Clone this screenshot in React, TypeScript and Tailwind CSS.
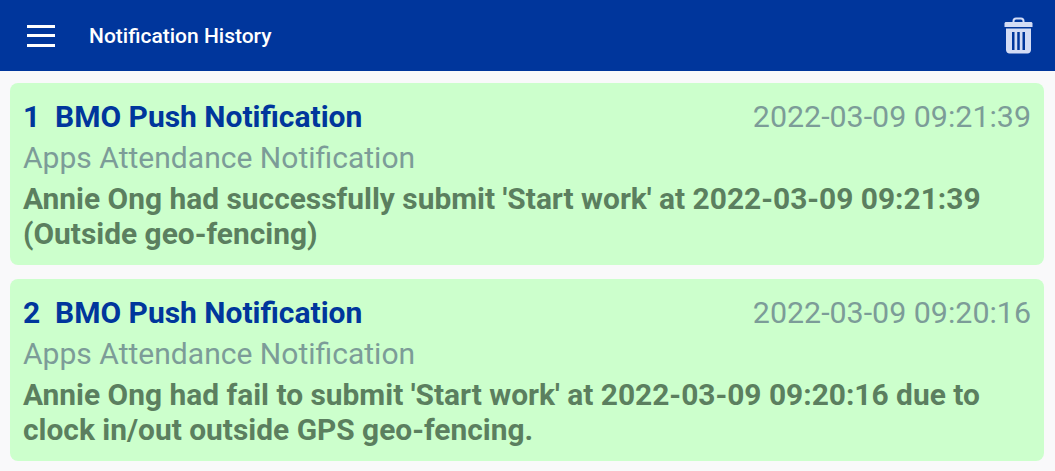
const items = [
  {
    id: 1,
    time: '2022-03-09 09:21:39',
    body: "Annie Ong had successfully submit 'Start work' at 2022-03-09 09:21:39 (Outside geo-fencing)",
  },
  {
    id: 2,
    time: '2022-03-09 09:20:16',
    body: "Annie Ong had fail to submit 'Start work' at 2022-03-09 09:20:16 due to clock in/out outside GPS geo-fencing.",
  },
]

function TrashIcon() {
  return (
    <svg width="30" height="38" viewBox="0 0 30 38" className="-translate-x-[0.5px] -translate-y-[0.5px] text-[#d3dcf5]">
      <path
        d="M10 6V4.500C10 3 11 2 12.500 2h5C19 2 20 3 20 4.500V6"
        fill="none"
        stroke="currentColor"
        strokeWidth="2"
      />
      <path d="M2.500 5.500h25c.8 0 1.500.7 1.500 1.500v3.500H1V7c0-.8.7-1.500 1.500-1.500z" fill="currentColor" />
      <path
        fillRule="evenodd"
        fill="currentColor"
        d="M2.500 12h25v21.500c0 1.900-1.500 3.500-3.500 3.500H6c-2 0-3.500-1.600-3.500-3.500V12zM8.500 15.500v18h2.500v-18H8.500zm5.250 0v18h2.500v-18h-2.500zm5.250 0v18h2.500v-18H19z"
      />
    </svg>
  )
}

export default function App() {
  return (
    <div className="h-[471px] w-[1055px] overflow-hidden bg-[#f9f9fa] font-['Roboto',sans-serif]">
      <header className="flex h-[71px] items-center justify-between bg-[#00369c] pl-[27px] pr-[21px]">
        <div className="flex items-center gap-[34px]">
          <div className="flex w-[28px] flex-col gap-[6.500px]">
            <div className="h-[3px] bg-white" />
            <div className="h-[3px] bg-white" />
            <div className="h-[3px] bg-white" />
          </div>
          <h1 className="pt-[2px] text-[21px] font-medium leading-none text-white">Notification History</h1>
        </div>
        <TrashIcon />
      </header>
      <main className="flex flex-col gap-[14px] pl-[10px] pr-[11px] pt-[12px]">
        {items.map((item) => (
          <div key={item.id} className="h-[182px] rounded-[8px] bg-[#ccffcc] pl-[13px] pr-[13px] pt-[15px]">
            <div className="flex h-[40px] items-start justify-between">
              <div className="flex text-[30px] font-bold leading-[38px] text-[#00369c]">
                <span className="w-[32px]">{item.id}</span>
                <span>BMO Push Notification</span>
              </div>
              <span className="text-[30.400px] leading-[38px] text-[#7c9c98]">{item.time}</span>
            </div>
            <p className="text-[30.050px] leading-[40px] text-[#7c9c98]">Apps Attendance Notification</p>
            <p className="mt-[2.500px] text-[29.900px] font-bold leading-[35px] text-[#5b7f5f]">{item.body}</p>
          </div>
        ))}
      </main>
    </div>
  )
}
